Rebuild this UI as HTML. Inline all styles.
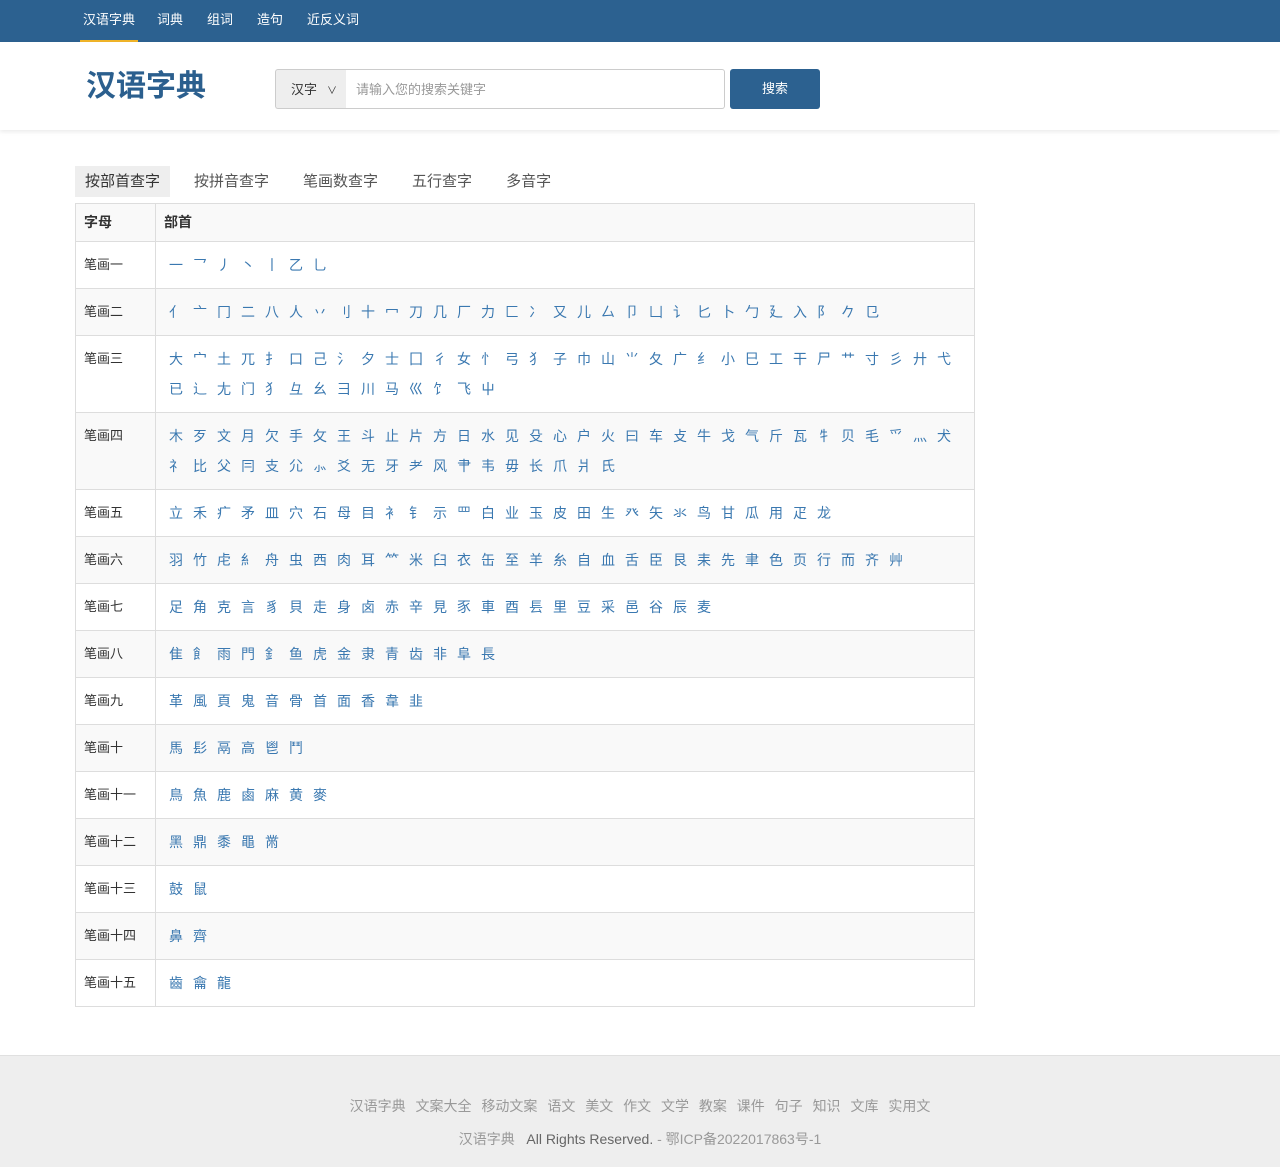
<!DOCTYPE html>
<html><head><meta charset="utf-8"><style>
*{box-sizing:border-box;margin:0;padding:0}
body{width:1280px;height:1167px;background:#fff;font-family:"Liberation Sans","Noto Sans CJK SC",sans-serif;font-size:14px;color:#333;position:relative}
.nav{height:42px;background:#2c6190;position:relative}
.nav a{position:absolute;top:0;height:42px;line-height:40px;color:#fff;font-size:13px;text-decoration:none}
.nav .act{border-bottom:2px solid #f0b429;padding:0 3px}
.hdr{height:88px;background:#fff;box-shadow:0 2px 4px rgba(0,0,0,.08);position:relative}
.logo{position:absolute;left:86px;top:27px;font-size:30px;font-weight:bold;color:#2b5f8e;line-height:36px}
.sel{position:absolute;left:275px;top:27px;width:71px;height:40px;background:#eee;border:1px solid #ccc;border-right:none;border-radius:3px 0 0 3px;line-height:40px;padding-left:15px;font-size:13px}
.sel span{font-size:10px;margin-left:10px}
.inp{position:absolute;left:345px;top:27px;width:380px;height:40px;border:1px solid #ccc;border-left:none;border-radius:0 3px 3px 0;line-height:40px;padding-left:11px;color:#999;font-size:13px}
.btn{position:absolute;left:730px;top:27px;width:90px;height:40px;background:#2c6190;border-radius:3px;color:#fff;text-align:center;line-height:40px;font-size:13px}
.tabs{position:absolute;top:166px;left:75px;height:31px}
.tabs span{float:left;height:31px;line-height:31px;padding:0 10px;margin-right:14px;font-size:15px;color:#555}
.tabs .on{background:#eee;color:#333}
table{position:absolute;left:75px;top:203px;width:900px;border-collapse:collapse}
td,th{border:1px solid #ddd;padding:8px;vertical-align:top;line-height:30px;font-size:14px;text-align:left}
th{height:38px;line-height:20px;font-weight:bold;background:#f9f9f9}
td:first-child{width:80px;font-size:13px}
tr.g td{background:#f9f9f9}
td a{display:inline-block;width:14px;margin:0 5px;color:#3a78b0;text-decoration:none;font-size:14px}
.foot{position:absolute;left:0;top:1055px;width:1280px;height:112px;background:#eee;border-top:1px solid #e0e0e0;text-align:center;color:#999;font-size:14px}
.foot .l{margin-top:40px;line-height:20px}
.foot .l span{margin:0 3px}
.foot .c{margin-top:13px;line-height:20px;font-size:14px}
</style></head><body>
<div class="nav">
<a class="act" style="left:80px">汉语字典</a>
<a style="left:157px">词典</a>
<a style="left:207px">组词</a>
<a style="left:257px">造句</a>
<a style="left:307px">近反义词</a>
</div>
<div class="hdr">
<div class="logo">汉语字典</div>
<div class="sel">汉字<span>∨</span></div>
<div class="inp">请输入您的搜索关键字</div>
<div class="btn">搜索</div>
</div>
<div class="tabs"><span class="on">按部首查字</span><span>按拼音查字</span><span>笔画数查字</span><span>五行查字</span><span>多音字</span></div>
<div id="w"></div>
<div class="foot">
<div class="l"><span>汉语字典</span> <span>文案大全</span> <span>移动文案</span> <span>语文</span> <span>美文</span> <span>作文</span> <span>文学</span> <span>教案</span> <span>课件</span> <span>句子</span> <span>知识</span> <span>文库</span> <span>实用文</span></div>
<div class="c">汉语字典 &nbsp; <span style="color:#666">All Rights Reserved.</span> - 鄂ICP备2022017863号-1</div>
</div>
<script>
var d=[["笔画一","一 乛 丿 丶 丨 乙 乚"],
["笔画二","亻 亠 冂 二 八 人 丷 刂 十 冖 刀 几 厂 力 匚 冫 又 儿 厶 卩 凵 讠 匕 卜 勹 廴 入 阝 𠂊 㔾"],
["笔画三","大 宀 土 兀 扌 口 己 氵 夕 士 囗 彳 女 忄 弓 犭 子 巾 山 ⺌ 夂 广 纟 小 巳 工 干 尸 艹 寸 彡 廾 弋 已 辶 尢 门 犭 彑 幺 彐 川 马 巛 饣 飞 屮"],
["笔画四","木 歹 文 月 欠 手 攵 王 斗 止 片 方 日 水 见 殳 心 户 火 曰 车 攴 牛 戈 气 斤 瓦 牜 贝 毛 爫 灬 犬 礻 比 父 冃 支 尣 ⺗ 爻 无 牙 耂 风 肀 韦 毋 长 爪 爿 氏"],
["笔画五","立 禾 疒 矛 皿 穴 石 母 目 衤 钅 示 罒 白 业 玉 皮 田 生 癶 矢 氺 鸟 甘 瓜 用 疋 龙"],
["笔画六","羽 竹 虍 糹 舟 虫 西 肉 耳 ⺮ 米 臼 衣 缶 至 羊 糸 自 血 舌 臣 艮 耒 先 聿 色 页 行 而 齐 艸"],
["笔画七","足 角 克 言 豸 貝 走 身 卤 赤 辛 見 豕 車 酉 镸 里 豆 采 邑 谷 辰 麦"],
["笔画八","隹 飠 雨 門 釒 鱼 虎 金 隶 青 齿 非 阜 長"],
["笔画九","革 風 頁 鬼 音 骨 首 面 香 韋 韭"],
["笔画十","馬 髟 鬲 高 鬯 鬥"],
["笔画十一","鳥 魚 鹿 鹵 麻 黄 麥"],
["笔画十二","黑 鼎 黍 黽 黹"],
["笔画十三","鼓 鼠"],
["笔画十四","鼻 齊"],
["笔画十五","齒 龠 龍"]];
var h="<table><tr><th>字母</th><th>部首</th></tr>";d.forEach(function(r,i){h+="<tr"+(i%2?" class=g":"")+"><td>"+r[0]+"</td><td>"+r[1].split(" ").map(function(c){return"<a>"+c+"</a>"}).join("")+"</td></tr>"});
document.getElementById("w").innerHTML=h+"</table>";
</script>
</body></html>
